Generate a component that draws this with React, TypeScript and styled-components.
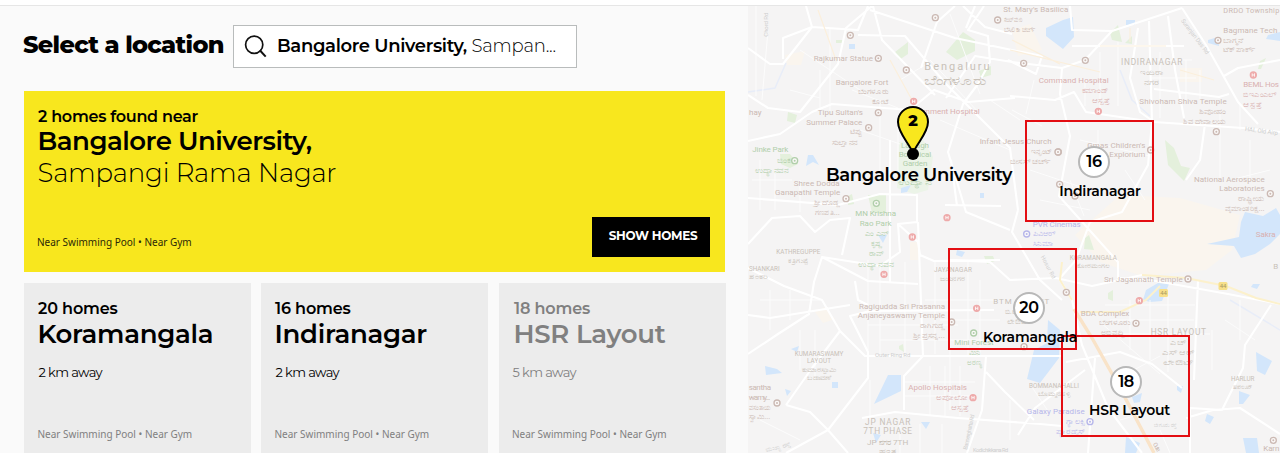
import React from "react";
import styled, { createGlobalStyle } from "styled-components";

const display = `Montserrat, Inter, sans-serif`;
const small = `"Noto Sans", sans-serif`;

const GlobalStyle = createGlobalStyle`
  *, *::before, *::after { box-sizing: border-box; }
  body { margin: 0; background: #fff; font-family: ${display}; color: #000; }
`;

const Page = styled.div`
  display: flex;
  flex-direction: column;
  width: 1280px;
  height: 453px;
  overflow: hidden;
`;

const TopBar = styled.header`
  flex: none;
  height: 6px;
  background: #fff;
  border-bottom: 1px solid #e6e6e6;
`;

const Body = styled.main`
  display: flex;
  flex: 1;
  min-height: 0;
`;

const Results = styled.section`
  flex: none;
  width: 748px;
  padding: 19px 22px 0 24px;
  background: #fafafa;
`;

const SearchRow = styled.div`
  display: flex;
  align-items: center;
  height: 43px;
  margin-bottom: 23px;
`;

const Title = styled.h1`
  width: 210px;
  margin: 0 0 3px -1px;
  font-size: 24px;
  line-height: 30px;
  font-weight: 800;
  letter-spacing: -0.68px;
  white-space: nowrap;
`;

const SearchBox = styled.div`
  display: flex;
  align-items: center;
  width: 344px;
  height: 43px;
  padding: 0 0 2px 10px;
  background: #fff;
  border: 1px solid #b9bcbc;
`;

const SearchIcon = styled.svg`
  flex: none;
  width: 24px;
  height: 24px;
  margin: 1px 9px 0 0;
`;

const SearchText = styled.div`
  font-size: 18px;
  line-height: 24px;
  font-weight: 600;
  letter-spacing: -0.34px;
  white-space: nowrap;
`;

const Light = styled.span`
  font-weight: 340;
  letter-spacing: -0.2px;
`;

const Featured = styled.article`
  display: flex;
  justify-content: space-between;
  align-items: flex-end;
  width: 701px;
  height: 181px;
  padding: 17px 15px 15px 14px;
  background: #f8e71e;
`;

const FeaturedInfo = styled.div`
  display: flex;
  flex-direction: column;
  align-self: stretch;
`;

const Cards = styled.div`
  display: grid;
  grid-template-columns: 227px 227px 227px;
  column-gap: 10px;
  width: 702px;
  margin-top: 11px;
`;

const Card = styled.article<{ $muted?: boolean }>`
  display: flex;
  flex-direction: column;
  height: 185px;
  margin-left: ${(p) => (p.$muted ? 1 : 0)}px;
  margin-right: ${(p) => (p.$muted ? -1 : 0)}px;
  padding: 16px 0 0 14px;
  background: #ececec;
  color: ${(p) => (p.$muted ? "#808080" : "#000")};
`;

const Count = styled.div<{ $line?: number; $spacing?: number; $shift?: number }>`
  padding-left: ${(p) => p.$shift ?? 0}px;
  font-size: 16px;
  line-height: ${(p) => p.$line ?? 19}px;
  font-weight: 600;
  letter-spacing: ${(p) => p.$spacing ?? -0.15}px;
  white-space: nowrap;
`;

const Name = styled.h2<{ $light?: boolean; $spacing?: number; $shift?: number }>`
  margin: 0 0 0 ${(p) => p.$shift ?? 0}px;
  font-size: 26px;
  line-height: 32px;
  font-weight: ${(p) => (p.$light ? 330 : 600)};
  letter-spacing: ${(p) => p.$spacing ?? -0.28}px;
  white-space: nowrap;
`;

const Distance = styled.div<{ $shift: number }>`
  margin: 14px 0 0 ${(p) => p.$shift}px;
  font-size: 13px;
  line-height: 16px;
  font-weight: 450;
  letter-spacing: -0.6px;
`;

const Nearby = styled.div<{ $color: string; $top?: number; $left?: number }>`
  margin: ${(p) => (p.$top ? `${p.$top}px` : "auto")} 0 ${(p) => (p.$top ? 0 : 8)}px ${(p) => p.$left ?? 0}px;
  font-family: ${small};
  font-size: 10px;
  line-height: 14px;
  color: ${(p) => p.$color};
  white-space: nowrap;
`;

const ShowButton = styled.button`
  width: 118px;
  height: 40px;
  padding: 0 0 3px 4px;
  border: 0;
  background: #000;
  color: #fff;
  font-family: ${display};
  font-size: 12px;
  font-weight: 700;
  letter-spacing: -0.3px;
`;

const MapPane = styled.section`
  position: relative;
  flex: 1;
  overflow: hidden;
  background: #f5f4f3;
`;

const MapArt = styled.svg`
  display: block;
  width: 532px;
  height: 447px;
`;

const Zone = styled.div<{ $x: number; $y: number }>`
  position: absolute;
  left: ${(p) => p.$x}px;
  top: ${(p) => p.$y}px;
  width: 129px;
  height: 102px;
  border: 2px solid #e30d12;
`;

const Marker = styled.div<{ $x: number; $y: number }>`
  position: absolute;
  left: ${(p) => p.$x}px;
  top: ${(p) => p.$y}px;
  display: flex;
  flex-direction: column;
  align-items: center;
  width: 0;
`;

const Bubble = styled.div`
  flex: none;
  display: flex;
  align-items: center;
  justify-content: center;
  width: 32px;
  height: 32px;
  padding-bottom: 1px;
  border: 2px solid #b8b8b8;
  border-radius: 50%;
  background: #fff;
  font-size: 16px;
  font-weight: 600;
  letter-spacing: -0.4px;
`;

const MarkerLabel = styled.div<{ $shift: number; $spacing: number; $top?: number }>`
  margin: ${(p) => p.$top ?? 4}px 0 0 ${(p) => p.$shift * 2}px;
  font-size: 14px;
  line-height: 18px;
  font-weight: 600;
  letter-spacing: ${(p) => p.$spacing}px;
  white-space: nowrap;
`;

const Pin = styled.svg`
  flex: none;
  width: 36px;
  height: 56px;
`;

const PinLabel = styled.div`
  margin: 4px 0 0 12px;
  font-size: 18px;
  line-height: 22px;
  font-weight: 600;
  letter-spacing: -0.36px;
  white-space: nowrap;
`;

/* Street map: every tile is drawn at three units per pixel. */
type Kind = "poi" | "hospital" | "park" | "area" | "shop" | "road";
const tone: Record<Kind, string> = {
  poi: "#cbb9b3",
  hospital: "#d9b0b0",
  park: "#b0ceaa",
  area: "#c8c1b8",
  shop: "#b6b6ea",
  road: "#cfcfcf",
};
type LabelDef = [x: number, y: number, text: string, kind: Kind, size: number, width: number, anchor?: "start" | "middle" | "end", turn?: number];
type DotDef = [x: number, y: number, kind: Kind];

interface TileDef {
  x: number;
  y: number;
  labels: LabelDef[];
  dots: DotDef[];
}

const tiles: TileDef[] = [
  {
    x: 745, y: 0,
    labels: [
      [70, 110, "Chord Rd", "road", 18, 72, "start", -90],
      [206, 183, "Rajkumar Statue", "poi", 24, 178],
      [272, 254, "Bangalore Fort", "poi", 24, 158],
      [430, 282, "ಬೆಂಗಳೂರು", "poi", 22, 92, "end"],
      [430, 311, "ಕೋಟೆ", "poi", 22, 50, "end"],
      [218, 346, "Tipu Sultan's", "poi", 24, 136],
      [184, 374, "Summer Palace", "poi", 24, 168],
      [352, 403, "ಟಿಪ್ಪು", "poi", 22, 38, "end"],
      [338, 434, "ಸುಲ್ತಾನನ", "poi", 22, 78, "end"],
      [22, 457, "Jinke Park", "park", 24, 108],
      [12, 346, "hay", "poi", 24, 38],
      [636, 210, "Bengaluru", "area", 33, 196, "middle"],
      [632, 254, "ಬೆಂಗಳೂರು", "area", 36, 188, "middle"],
      [480, 342, "Government Hospital", "hospital", 24, 224],
      [704, 432, "Infant Jesus Church", "poi", 24, 216],
      [775, 36, "St. Mary's Basilica", "poi", 24, 195],
      [776, 66, "ಸೇಂಟ್ ಮೇರಿ", "poi", 22, 56],
      [776, 97, "ಬೆಸಿಲಿಕಾ ಚರ್ಚ್", "poi", 22, 96],
      [510, 445, "Lalbagh", "park", 24, 84, "middle"],
      [510, 470, "Botanical", "park", 24, 98, "middle"],
    ],
    dots: [[571, 53, "poi"], [316, 106, "poi"], [400, 175, "poi"], [484, 210, "poi"], [400, 338, "poi"], [371, 383, "poi"], [758, 60, "poi"], [506, 304, "hospital"]],
  },
  {
    x: 1010, y: 0,
    labels: [
      [640, 38, "DRDO Township", "poi", 22, 168],
      [640, 99, "Bagmane Tech", "poi", 24, 162],
      [640, 128, "ಬಾಗ್ಮನೆ", "poi", 22, 58],
      [640, 156, "ಟೆಕ್ ಪಾರ್ಕ್", "poi", 22, 96],
      [425, 196, "INDIRANAGAR", "area", 25, 184, "middle"],
      [425, 226, "ಇಂದಿರಾ", "area", 22, 72, "middle"],
      [425, 256, "ನಗರ", "area", 22, 46, "middle"],
      [86, 250, "Command Hospital", "hospital", 24, 210],
      [296, 278, "ಕಮಾಂಡ್", "hospital", 22, 80, "end"],
      [296, 309, "ಆಸ್ಪತ್ರೆ", "hospital", 22, 50, "end"],
      [388, 312, "Shivoham Shiva Temple", "poi", 24, 262],
      [648, 341, "ಶಿವೋಹಂ", "poi", 22, 80, "end"],
      [648, 371, "ಶಿವ ದೇವಾಲಯ", "poi", 22, 128, "end"],
      [700, 262, "BEML Hos", "hospital", 24, 107],
      [700, 291, "ಬಿಇಎಂಎಲ್", "hospital", 22, 98],
      [700, 321, "ಆಸ್ಪತ್ರೆ", "hospital", 22, 52],
      [232, 444, "Gmas Children's", "poi", 24, 174],
      [512, 62, "Suranjan Das Rd", "road", 18, 128, "start", 53],
      [704, 392, "HAL Old Airp", "road", 18, 100, "start", 8],
      [64, 462, "ಇನ್ಫಂಟ್", "poi", 22, 62],
    ],
    dots: [[226, 181, "poi"], [41, 190, "poi"], [265, 334, "hospital"], [624, 121, "poi"], [730, 225, "hospital"], [619, 395, "poi"], [422, 450, "poi"], [145, 456, "poi"]],
  },
  {
    x: 745, y: 150,
    labels: [
      [96, 39, "ಜಿಂಕೆ", "park", 22, 40],
      [30, 69, "ಉದ್ಯಾನವನ", "park", 22, 102],
      [146, 107, "Shree Dodda", "poi", 24, 138],
      [90, 135, "Ganapathi Temple", "poi", 24, 196],
      [284, 164, "ಶ್ರೀ ದೊಡ್ಡ", "poi", 22, 78, "end"],
      [284, 194, "ಗಣಪತಿ...", "poi", 22, 74, "end"],
      [392, 198, "MN Krishna", "park", 24, 122, "middle"],
      [392, 227, "Rao Park", "park", 24, 96, "middle"],
      [394, 258, "ಎಂ ಎನ್", "park", 22, 70, "middle"],
      [394, 288, "ಕೃಷ್ಣ", "park", 22, 32, "middle"],
      [394, 318, "ರಾವ್", "park", 22, 46, "middle"],
      [394, 350, "ಉದ್ಯಾನವನ", "park", 22, 108, "middle"],
      [510, 48, "Garden", "park", 24, 74, "middle"],
      [510, 106, "ಉದ್ಯಾನ", "park", 22, 104, "middle"],
      [160, 312, "KATHREGUPPE", "area", 19, 132, "middle"],
      [160, 338, "ಕತ್ರಿಗುಪ್ಪೆ", "area", 20, 60, "middle"],
      [12, 362, "SHANKARI", "area", 19, 92],
      [12, 386, "ಶಂಕರಿ", "area", 20, 58],
      [624, 367, "JAYANAGAR", "area", 19, 114, "middle"],
      [624, 392, "ಜಯನಗರ", "area", 20, 78, "middle"],
    ],
    dots: [[149, 32, "park"], [303, 146, "poi"], [394, 160, "park"], [606, 203, "hospital"], [502, 261, "hospital"], [417, 373, "hospital"]],
  },
  {
    x: 1010, y: 150,
    labels: [
      [298, 21, "Explorium", "poi", 24, 108],
      [0, 42, "ಜೀಸಸ್ ಚರ್ಚ್", "poi", 22, 122],
      [552, 96, "National Aerospace", "poi", 24, 212],
      [628, 124, "Laboratories", "poi", 24, 136],
      [764, 152, "ರಾಷ್ಟ್ರೀಯ", "poi", 22, 80, "end"],
      [764, 183, "ವೈಮಾಂತರಿಕ್ಷ...", "poi", 22, 120, "end"],
      [68, 231, "PVR Cinemas", "shop", 24, 144],
      [68, 259, "ಪಿವಿಆರ್", "shop", 22, 66],
      [68, 289, "ಸಿನಿಮಾ", "shop", 22, 62],
      [737, 262, "Sakra", "hospital", 24, 60],
      [790, 356, "B", "area", 24, 15],
      [250, 331, "KORAMANGALA", "area", 19, 142, "middle"],
      [250, 354, "ಕೋರಮಂಗಲ", "area", 20, 98, "middle"],
      [282, 396, "Sri Jagannath Temple", "poi", 24, 236],
      [92, 320, "Hosur Rd", "road", 17, 76, "start", 62],
    ],
    dots: [[144, 6, "poi"], [149, 103, "poi"], [195, 138, "poi"], [781, 131, "poi"], [50, 252, "shop"], [169, 427, "poi"], [534, 387, "poi"], [388, 452, "hospital"]],
  },
  {
    x: 745, y: 298,
    labels: [
      [342, 32, "Ragigudda Sri Prasanna", "poi", 24, 258],
      [338, 60, "Anjaneyaswamy Temple", "poi", 24, 262],
      [600, 90, "ರಾಗಿಗುಡ್ಡ", "poi", 22, 76, "end"],
      [600, 119, "ಶ್ರೀ ಪ್ರಸನ್ನ...", "poi", 22, 96, "end"],
      [628, 140, "Mini Forest", "park", 24, 118],
      [688, 170, "ಮಿನಿ", "park", 22, 34, "middle"],
      [688, 200, "ಅರಣ್ಯ", "park", 22, 44, "middle"],
      [222, 175, "KUMARASWAMY", "area", 19, 146, "middle"],
      [222, 196, "LAYOUT", "area", 19, 72, "middle"],
      [222, 221, "ಕುಮಾರಸ್ವಾಮಿ", "area", 20, 104, "middle"],
      [222, 245, "ಬಡಾವಣೆ", "area", 20, 72, "middle"],
      [390, 178, "Outer Ring Rd", "road", 18, 106],
      [11, 277, "santha", "poi", 24, 67],
      [11, 305, "wamy...", "poi", 24, 65],
      [11, 335, "ವಸಂತಾಯ", "poi", 22, 67],
      [11, 364, "ಸ್ವಾಮಿ...", "poi", 22, 65],
      [490, 276, "Apollo Hospitals", "hospital", 24, 176],
      [668, 305, "ಅಪೋಲೋ", "hospital", 22, 94, "end"],
      [668, 335, "ಆಸ್ಪತ್ರೆ", "hospital", 22, 50, "end"],
      [428, 380, "JP NAGAR", "area", 25, 136, "middle"],
      [428, 409, "7TH PHASE", "area", 25, 146, "middle"],
      [428, 441, "JP ನಗರ 7TH", "area", 24, 124, "middle"],
      [428, 464, "ಹಂತ", "area", 18, 50, "middle"],
      [666, 456, "Bannerghatta Rd", "road", 17, 108, "start", -78],
      [684, 461, "Kodichikkana Rd", "road", 17, 106],
      [64, 462, "ಮುಖ್ಯ ರಸ್ತೆ", "road", 18, 76, "start", -14],
    ],
    dots: [[620, 72, "poi"], [695, 31, "hospital"], [686, 105, "park"], [96, 315, "poi"], [684, 299, "hospital"]],
  },
  {
    x: 1010, y: 298,
    labels: [
      [-50, 18, "BTM LAYOUT", "area", 24, 168],
      [-16, 48, "ಬಿ.ಟಿ.ಎಂ", "area", 22, 68],
      [-10, 78, "ಲೇಔಟ್", "area", 22, 66],
      [212, 53, "BDA Complex", "poi", 24, 146],
      [268, 82, "ಬೆಂಗಳೂರು", "poi", 22, 92],
      [272, 112, "ಅಭಿವೃದ್ಧಿ", "poi", 22, 72],
      [505, 110, "HSR LAYOUT", "area", 25, 166, "middle"],
      [504, 140, "ಎಚ್", "area", 22, 46, "middle"],
      [504, 171, "ಎಸ್ ಆರ್", "area", 22, 96, "middle"],
      [506, 201, "ಲೇಔಟ್", "area", 22, 94, "middle"],
      [132, 270, "BOMMANAHALLI", "area", 19, 150, "middle"],
      [132, 294, "ಬೊಮ್ಮನಹಳ್ಳಿ", "area", 20, 98, "middle"],
      [50, 347, "Galaxy Paradise", "shop", 24, 174],
      [224, 377, "ಗ್ಯಾಲಕ್ಸಿ", "shop", 22, 56, "end"],
      [224, 407, "ಪ್ಯಾರಡೈಸ್", "shop", 22, 86, "end"],
      [698, 250, "HARLUR", "area", 19, 70, "middle"],
      [698, 274, "ಹಾರಲೂರ್", "area", 20, 60, "middle"],
      [760, 460, "Karn", "poi", 24, 48],
      [432, 386, "ಬೇಗೂರು ರಸ್ತೆ", "road", 17, 66],
      [428, 438, "Oute", "poi", 18, 28, "start", 60],
    ],
    dots: [[378, 76, "poi"], [42, 146, "poi"], [240, 371, "shop"], [790, 427, "poi"]],
  },
];

/* Area shapes and streets use page pixels. */
const parks = [
  "M946 52 L963 32 L975 40 L975 51 L957 60Z", "M895 52 L908 42 L908 54 L899 60Z", "M836 40h8l-2 3h-6z",
  "M979 71l12-5v9l-10 3z", "M788 112l9 3-2 8-8-2z", "M1110 33l8-8 4 17-10-2z", "M1125 43l7-7v8z", "M1260 61l6-3-5 11h-3z",
  "M868 195h18v18h-14z", "M1165 140 L1174 148 L1181 166 L1190 168 L1184 181 L1168 165Z", "M1085 238l4-3 5 15-10-1z", "M984 256l9 0 2 5-8 3z",
  "M1108 293l5-3v11l-5-2z", "M899 346l4-2 1 8-5-3z", "M848 196l4-2 2 10-6 1z", "M780 154l10 0 8 10-8 4-9-4z",
];
const waters = [
  "M1063 20 L1073 17 L1074 37 L1063 49 L1046 36 L1046 28Z", "M1126 20h9v5h-9z", "M1208 40l10-3 1 9-11-3z",
  "M1268 35l12-3v9l-14-2z", "M849 44h6v5h-6z", "M808 155l5 0 6 10-6-3-7 4z", "M901 188l10-3-4 7-6 1z",
  "M1245 212 L1263 216 L1276 208 L1280 215 V234 L1270 244 L1255 254 L1241 258 L1234 246 L1207 244 L1239 237 L1241 222Z",
  "M1146 290 L1158 283 L1169 284 L1162 301 L1150 302 L1143 300Z", "M888 375 L901 375 L901 391 L874 404Z",
  "M765 366l12 3 5 4-16 2z", "M832 382h6v6h-6z", "M1048 320 L1060 330 L1059 358 L1040 383 L1027 379 L1034 350 L1047 343Z",
  "M1256 352l16 9-7 14-8-4z", "M1239 391l11 4-7 9h-4z", "M1177 386h6l-2 7-4-3z", "M921 422h9l-4 7z",
  "M1126 437l14 6-4 10h-11z", "M1243 438l14 0 2 15h-13z", "M957 250l8 2-3 5-6-2z", "M1132 397l10-4-2 9-6 1z",
  "M878 235l9 0-4 8z", "M873 433l8 2-5 8z", "M791 349l8-3-2 6z", "M980 193h4v5h-4z", "M1253 284h7l-3 5-6-2z", "M785 389l6 2-4 5z", "M1207 414l7 3-4 7-5-3z",
];
const warm = [
  "M1075 235 L1120 195 L1180 198 L1240 215 L1232 250 L1206 270 L1142 276 L1100 262Z", "M910 242h10v18h-10z",
  "M1180 68h22v14h-22z", "M785 55l20-4-4 14-14 0z", "M1012 30l18-6 12 26-24 6z", "M815 312l10-5 10 12-12 4z",
];
const mainRoads = [
  "M748 48 L770 64 L783 64 L812 27 L806 6", "M783 59 L783 38 L812 27 L858 30 L868 6", "M748 95 L768 108 L800 112 L838 64 L846 28 L872 6",
  "M748 141 L780 134 L812 112 L832 104 L910 110 L934 90 L968 102 L1015 98", "M858 35 L905 36 L946 84 L1010 148 L1018 210",
  "M955 6 L937 22 L921 68", "M870 10 L955 38 L1012 50", "M873 6 L882 40 L935 95", "M963 6 L985 27 L1012 34", "M975 6 L966 28",
  "M984 6 L968 30 L988 36 L990 62 L978 84 L963 104 L948 152 L966 212 L1010 230", "M946 98 L975 56 L1012 62 L1062 68 L1085 60 L1112 31 L1182 8",
  "M1070 6 L1072 30 L1112 31", "M1010 96 L1055 100 L1074 92 L1086 112 L1154 122 L1243 128 L1280 132", "M1138 28 L1130 78 L1140 112 L1154 122",
  "M1168 16 L1175 70 L1184 118", "M1149 21 L1152 122", "M1072 46h112", "M1154 89l65 8 10-3", "M1182 8 L1206 45 L1238 102 L1258 124", "M1224 76 L1238 68 L1280 60",
  "M1062 68 L1060 94 L1070 136 L1059 196 L1118 262 L1118 278", "M1152 122 L1148 165 L1122 212 L1090 222 L1076 260 L1060 278", "M1012 50 L1042 56 L1036 74 L1008 60", "M1205 124 L1200 160 L1186 180",
  "M748 198 L838 205 L880 194 L917 195 L917 222 L898 224 L900 252 L880 266 L822 257 L814 282 L809 314 L778 334 L748 354",
  "M748 244 L772 218 L800 216 L815 232 L830 220 L850 218 L842 255", "M748 268 L784 286 L822 300 L840 331 L865 356 L1062 356", "M822 257 L868 281 L918 284", "M855 281 L858 300 L868 305",
  "M898 224 L918 242 L920 255 L934 261 L1000 260", "M948 260 L990 262 L1010 280 L1056 278 L1092 286 L1142 275", "M994 310 L870 311 L850 316 L868 352 L868 378 L828 430 L786 453",
  "M748 315 L770 318 L850 305", "M786 405 L810 412 L828 430 L848 453", "M786 405 L812 368 L840 331", "M862 418 L895 412 L958 418 L1040 424 L1062 426",
  "M918 222 L923 356 L904 376 L904 410", "M986 356 L982 410 L967 453", "M1018 210 L1012 232 L1040 280 L1062 300", "M986 372 L1005 392 L1034 420", "M1066 362 L1120 352 L1152 364 L1182 388",
  "M1118 278 L1150 280 L1228 294 L1280 304", "M1271 305 L1245 345 L1243 368 L1222 410 L1190 408 L1190 453", "M1186 418 L1213 410 L1240 408 L1280 434", "M1060 280 L1072 300 L1082 345 L1108 408 L1142 453",
  "M1095 358 L1088 453", "M1018 435 L1035 408 L1085 370", "M1198 280 L1194 380", "M890 140 L890 284", "M945 205 L1001 206", "M957 206 L951 160",
];
const minorRoads = [
  "M756 6v90M768 30l-6 70M800 50l60 40M830 28v84M852 90l46 18M820 70v40M790 90l30 8M880 100v80M898 120v60M860 130l40 14",
  "M868 260v90M880 266v88M905 262v92M935 262v92M950 260v150M968 260v96M980 280v76M868 325h90M880 340h110M925 300h70M940 320h60",
  "M1085 80v26M1100 52v56M1118 42v64M1152 60h40M1152 78h44M1186 60v42M1200 70v30M1160 52v66M1220 110v70M1240 104v26",
  "M1030 170l60 20M1040 200l50 10M1080 140l70 16M1098 130v30M1125 170l20 30M1070 180l14 36",
  "M1105 305h90M1110 320h84M1120 334h90M1150 300v60M1168 296v76M1130 300v50M1212 330v40M1100 322l60 52M1130 372l30-16",
  "M760 160v50M775 170v40M752 180h40M800 180v32M770 290v40M790 290v30M760 300h60M800 330v40M815 330v50M870 380v40M930 366v50M945 366v50M960 366v50M905 382h70M905 396h70",
  "M760 420l40 20M900 420v33M920 424v29M942 424v29M1010 400v40M1030 384l20 30M1120 420l50-14M1160 430l10 23M1240 300v40M1225 320l30 20",
  "M930 60l50 54M940 120l70 30M900 80l30-18M1012 110l30 16M1034 80l-8 34M990 100l30 20M950 14l30 80M1230 180l40-10M1250 140v40",
];
const highways = ["M1142 275 L1186 278 L1226 286 L1256 298 L1280 304", "M1062 262 L1060 280 L1072 300", "M1080 312 L1120 312 L1146 300 L1160 286"];

function StreetMap() {
  return (
    <MapArt viewBox="748 6 532 447" fontFamily="Roboto, 'Noto Sans', sans-serif">
      <rect x="748" y="6" width="532" height="447" fill="#f5f4f4" />
      <path d={warm.join(" ")} fill="#faf5ee" />
      <path d={parks.join(" ")} fill="#e4f0dc" />
      <path d="M899 142 L923 140 L933 157 L928 190 L914 194 L897 188Z" fill="#ecf4e8" />
      <path d={waters.join(" ")} fill="#d3e6fb" />
      <path d="M748 92L775 88L786 63M1120 70L1132 100L1150 116M1230 300L1280 330" fill="none" stroke="#e8edf8" strokeWidth="1.5" />
      <path d={minorRoads.join(" ")} fill="none" stroke="#fcfcfc" strokeWidth="1" />
      <path d={mainRoads.join(" ")} fill="none" stroke="#fff" strokeWidth="2.1" strokeLinejoin="round" />
      <path d="M818 10l18 50M1012 40l48 24M1100 46h66M1130 28v14M1010 50l90 22M890 60l22 40M1180 70l34 10" fill="none" stroke="#fbefdc" strokeWidth="1.2" />
      <path d={highways.join(" ")} fill="none" stroke="#fcf1cc" strokeWidth="2" />
      <path d="M1074 309L1092 338L1120 388L1142 430L1154 453" fill="none" stroke="#f9e3c8" strokeWidth="3.4" />
      {tiles.map((tile) => (
        <g key={`${tile.x}-${tile.y}`} transform={`translate(${tile.x} ${tile.y}) scale(.33333)`}>
          {tile.dots.map(([x, y, kind]) => (
            <g key={`${x}-${y}`} transform={`translate(${x} ${y})`}>
              <circle r="9" fill={kind === "hospital" ? "#eeaaaa" : "#fbf9f8"} stroke={kind === "hospital" ? "#eeaaaa" : tone[kind]} strokeWidth="4" />
              {kind === "hospital" ? (
                <path d="M-3.5-5V5M3.5-5V5M-3.5 0H3.5" stroke="#fff" strokeWidth="2.4" />
              ) : (
                <circle r="3" fill={tone[kind]} />
              )}
            </g>
          ))}
          {tile.labels.map(([x, y, text, kind, size, width, anchor = "start", turn = 0]) => (
            <text
              key={`${x}-${y}`}
              fontSize={size}
              fill={tone[kind]}
              textAnchor={anchor}
              textLength={width}
              lengthAdjust={/^[A-Za-z0-9 .']+$/.test(text) ? "spacing" : "spacingAndGlyphs"}
              transform={`translate(${x} ${y}) rotate(${turn})`}
            >
              {text}
            </text>
          ))}
        </g>
      ))}
      {[[1163.5, 293], [1223, 286]].map(([x, y]) => (
        <g key={x}>
          <rect x={x - 4.5} y={y - 4} width="9" height="8" rx="1.5" fill="#f7e08a" />
          <text x={x} y={y + 2.2} fontSize="6" textAnchor="middle" fill="#a99a62">44</text>
        </g>
      ))}
    </MapArt>
  );
}

const homes = [
  { count: "20 homes", name: "Koramangala", away: "2 km away", muted: false, inset: 0 },
  { count: "16 homes", name: "Indiranagar", away: "2 km away", muted: false, inset: 0 },
  { count: "18 homes", name: "HSR Layout", away: "5 km away", muted: true, inset: 1 },
];

export default function App() {
  return (
    <Page>
      <GlobalStyle />
      <TopBar />
      <Body>
        <Results>
          <SearchRow>
            <Title>Select a location</Title>
            <SearchBox>
              <SearchIcon viewBox="0 0 24 24" fill="none" stroke="#111" strokeWidth="1.7">
                <circle cx="10.2" cy="10.7" r="8.6" />
                <path d="M15.8 16.3L21.7 22.6" strokeWidth="2" />
              </SearchIcon>
              <SearchText>
                Bangalore University, <Light>Sampan...</Light>
              </SearchText>
            </SearchBox>
          </SearchRow>
          <Featured>
            <FeaturedInfo>
              <Count $line={17} $spacing={-0.28}>2 homes found near</Count>
              <Name $spacing={-0.5} $shift={-0.5}>Bangalore University,</Name>
              <Name $light $spacing={-0.2} $shift={-0.5}>Sampangi Rama Nagar</Name>
              <Nearby $color="#2b2807" $left={-1}>Near Swimming Pool • Near Gym</Nearby>
            </FeaturedInfo>
            <ShowButton>SHOW HOMES</ShowButton>
          </Featured>
          <Cards>
            {homes.map((h) => (
              <Card key={h.name} $muted={h.muted}>
                <Count $shift={h.inset}>{h.count}</Count>
                <Name $shift={h.inset - 0.5}>{h.name}</Name>
                <Distance $shift={h.muted ? -0.5 : 0.5}>{h.away}</Distance>
                <Nearby $color="#808080" $top={47} $left={h.muted ? -1 : -0.5}>Near Swimming Pool • Near Gym</Nearby>
              </Card>
            ))}
          </Cards>
        </Results>
        <MapPane>
          <StreetMap />
          <Zone $x={277} $y={114} />
          <Zone $x={200} $y={242} />
          <Zone $x={313} $y={329} />
          <Marker $x={165} $y={98}>
            <Pin viewBox="0 0 36 56">
              <path d="M18 49C14 39 3 29 3 18a15 15 0 0 1 30 0C33 29 22 39 18 49Z" fill="#f8e71e" stroke="#000" strokeWidth="2" />
              <circle cx="18" cy="50" r="6" />
              <text x="18" y="22.3" textAnchor="middle" fontFamily={display} fontSize="16" fontWeight="800">2</text>
            </Pin>
            <PinLabel>Bangalore University</PinLabel>
          </Marker>
          <Marker $x={346} $y={140}>
            <Bubble>16</Bubble>
            <MarkerLabel $shift={6} $spacing={-0.2}>Indiranagar</MarkerLabel>
          </Marker>
          <Marker $x={281} $y={286}>
            <Bubble>20</Bubble>
            <MarkerLabel $shift={1} $spacing={-0.22}>Koramangala</MarkerLabel>
          </Marker>
          <Marker $x={378} $y={360}>
            <Bubble>18</Bubble>
            <MarkerLabel $shift={3.5} $spacing={-0.25} $top={3}>HSR Layout</MarkerLabel>
          </Marker>
        </MapPane>
      </Body>
    </Page>
  );
}
